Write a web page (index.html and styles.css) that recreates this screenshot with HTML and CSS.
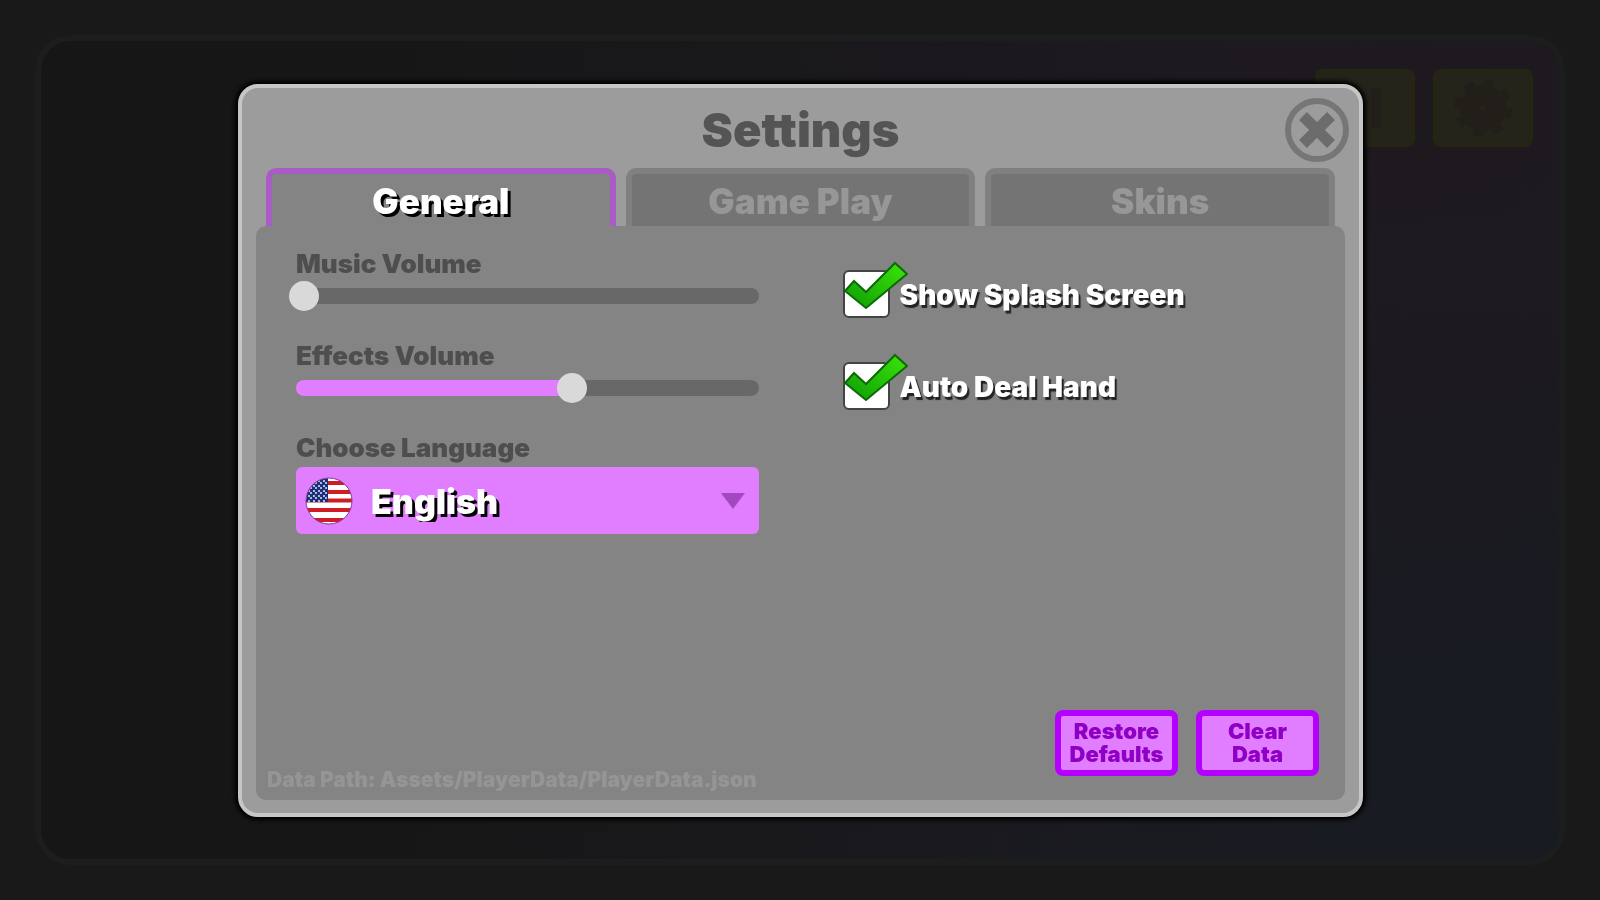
FILE: index.html
```html
<!DOCTYPE html>
<html lang="en">
<head>
    <meta charset="UTF-8">
    <meta name="viewport" content="width=device-width, initial-scale=1.0">
    <title>Settings</title>
    <link rel="stylesheet" href="styles.css">
</head>
<body>
    <main class="game">
        <div class="game-actions">
            <button class="game-btn" aria-label="Statistics">
                <svg viewBox="0 0 60 60" width="60" height="60"><path d="M12 34h8v16h-8zM24 22h8v28h-8zM36 10h10v40H36z" fill="currentColor"/></svg>
            </button>
            <button class="game-btn" aria-label="Settings">
                <svg viewBox="0 0 60 60" width="60" height="60">
                    <circle cx="30" cy="30" r="13" fill="none" stroke="currentColor" stroke-width="20"/>
                    <circle cx="30" cy="30" r="24" fill="none" stroke="currentColor" stroke-width="10" stroke-dasharray="9.4 9.45"/>
                </svg>
            </button>
        </div>
    </main>

    <div class="overlay">
        <section class="modal" role="dialog" aria-labelledby="title">
            <header class="modal-header">
                <h1 id="title">Settings</h1>
                <button class="close-btn" aria-label="Close">
                    <svg viewBox="0 0 64 64" width="64" height="64">
                        <circle cx="32" cy="32" r="29" fill="none" stroke="#767676" stroke-width="6"/>
                        <path d="M18 18L46 46M46 18L18 46" stroke="#6c6c6c" stroke-width="11"/>
                    </svg>
                </button>
            </header>

            <nav class="tabs" role="tablist">
                <button class="tab active" role="tab" aria-selected="true">General</button>
                <button class="tab" role="tab" aria-selected="false">Game Play</button>
                <button class="tab" role="tab" aria-selected="false">Skins</button>
            </nav>

            <div class="panel">
                <div class="options">
                    <div class="column">
                        <div class="field">
                            <label for="music">Music Volume</label>
                            <input type="range" id="music" class="slider" min="0" max="100" value="0" style="--fill: 0%">
                        </div>
                        <div class="field">
                            <label for="effects">Effects Volume</label>
                            <input type="range" id="effects" class="slider" min="0" max="100" value="62" style="--fill: 60%">
                        </div>
                        <div class="field">
                            <label for="language">Choose Language</label>
                            <div class="select-box">
                                <svg class="flag" viewBox="0 0 48 48" width="48" height="48">
                                    <defs>
                                        <clipPath id="round"><circle cx="24" cy="24" r="23"/></clipPath>
                                        <pattern id="stars" width="5" height="5" patternUnits="userSpaceOnUse">
                                            <circle cx="1" cy="1" r="1" fill="#dfe3f5"/>
                                            <circle cx="4" cy="4" r="1" fill="#dfe3f5"/>
                                        </pattern>
                                    </defs>
                                    <g clip-path="url(#round)">
                                        <path d="M0 0h48v48H0z" fill="#fff"/>
                                        <path d="M0 6h48M0 15h48M0 23.500h48M0 33h48M0 43h48" stroke="#d01c24" stroke-width="4"/>
                                        <path d="M0 0h23v25H0z" fill="#1c2f78"/>
                                        <path d="M0 0h23v25H0z" fill="url(#stars)"/>
                                    </g>
                                    <circle cx="24" cy="24" r="23" fill="none" stroke="#7d3a9c" stroke-width="1"/>
                                </svg>
                                <select id="language">
                                    <option>English</option>
                                </select>
                                <svg class="arrow" viewBox="0 0 24 16" width="24" height="16"><path d="M0 0h24L12 16z" fill="#a249bf"/></svg>
                            </div>
                        </div>
                    </div>

                    <div class="column">
                        <label class="check-row">
                            <input type="checkbox" checked>
                            <svg class="tick" viewBox="0 0 66 52" width="66" height="52"><path d="M2 30L11 20L23 31L52 2L64 13L23 47z" fill="url(#green)" stroke="#0d6a08" stroke-width="2"/></svg>
                            <span>Show Splash Screen</span>
                        </label>
                        <label class="check-row">
                            <input type="checkbox" checked>
                            <svg class="tick" viewBox="0 0 66 52" width="66" height="52">
                                <defs>
                                    <linearGradient id="green" x1="0" y1="1" x2="1" y2="0">
                                        <stop offset="0" stop-color="#0d9a06"/>
                                        <stop offset="1" stop-color="#3ce60a"/>
                                    </linearGradient>
                                </defs>
                                <path d="M2 30L11 20L23 31L52 2L64 13L23 47z" fill="url(#green)" stroke="#0d6a08" stroke-width="2"/>
                            </svg>
                            <span>Auto Deal Hand</span>
                        </label>
                    </div>
                </div>

                <footer class="panel-footer">
                    <p class="data-path">Data Path: Assets/PlayerData/PlayerData.json</p>
                    <div class="actions">
                        <button class="btn">Restore<br>Defaults</button>
                        <button class="btn">Clear<br>Data</button>
                    </div>
                </footer>
            </div>
        </section>
    </div>
</body>
</html>
```
FILE: styles.css
```css
* {
    box-sizing: border-box;
}
body {
    margin: 0;
    padding: 35px;
    min-height: 100vh;
    display: flex;
    background: #191919;
    font-family: Inter, "Open Sans", sans-serif;
    font-weight: 900;
}
button, select {
    font: inherit;
    border: none;
    padding: 0;
    cursor: pointer;
}

/* dimmed game table behind the dialog */
.game {
    flex: 1;
    border: 6px solid #1c1d1d;
    border-radius: 36px;
    padding: 28px 26px;
    background:
        radial-gradient(circle at 90% 0%, #1e191f, transparent 40%),
        radial-gradient(circle at 95% 90%, #181b22, transparent 50%),
        linear-gradient(90deg, #161616 10%, #1c1a20 90%);
}
.game-actions {
    display: flex;
    justify-content: flex-end;
    gap: 18px;
}
.game-btn {
    width: 100px;
    height: 78px;
    display: grid;
    place-items: center;
    border: 4px solid #252512;
    border-radius: 8px;
    background: #25241b;
    color: #221f1a;
}

.overlay {
    position: fixed;
    inset: 0;
    display: flex;
    padding: 84px 237px 83px 238px;
}
.modal {
    flex: 1;
    display: flex;
    flex-direction: column;
    padding: 0 14px 13px;
    border: 4px solid #c6c6c6;
    border-radius: 20px;
    background: #9c9c9c;
    box-shadow: 0 0 4px 3px #000;
}
.modal-header {
    display: grid;
    grid-template-columns: 64px 1fr 64px;
    align-items: center;
    height: 80px;
    padding-top: 3px;
    margin: 0 -4px;
}
.modal-header h1 {
    grid-column: 2;
    margin: 0;
    text-align: center;
    font-size: 47px;
    line-height: 64px;
    font-weight: 900;
    color: #545454;
}
.close-btn {
    height: 64px;
    background: none;
}

.tabs {
    display: flex;
    gap: 10px;
    padding: 0 10px;
}
.tab {
    flex: 1;
    height: 58px;
    padding-top: 2px;
    border: 6px solid #808080;
    border-bottom: none;
    border-radius: 10px 10px 0 0;
    background: #747474;
    font-size: 35px;
    line-height: 44px;
    color: #979797;
}
.tab.active {
    border-color: #a85cc6;
    background: #848484;
    color: #fff;
    text-shadow: 3px 3px 0 #000;
}

.panel {
    flex: 1;
    display: flex;
    flex-direction: column;
    justify-content: space-between;
    border-radius: 10px;
    background: #848484;
}
.options {
    display: grid;
    grid-template-columns: 1fr 1fr;
    gap: 84px;
    padding: 22px 40px;
}
.field {
    height: 92px;
}
.field label {
    display: block;
    font-size: 26px;
    line-height: 32px;
    color: #4e4e4e;
}

.slider {
    display: block;
    -webkit-appearance: none;
    appearance: none;
    width: 100%;
    height: 16px;
    margin: 8px 0 0;
    border-radius: 8px;
    background: linear-gradient(90deg, #e07eff var(--fill), #686868 var(--fill));
}
.slider::-webkit-slider-thumb {
    -webkit-appearance: none;
    width: 30px;
    height: 30px;
    margin-left: -7px;
    border-radius: 50%;
    background: #d9d9d9;
}

.select-box {
    display: flex;
    align-items: center;
    height: 67px;
    margin-top: 3px;
    padding: 0 14px 0 9px;
    border-radius: 6px;
    background: #e07eff;
}
.select-box select {
    flex: 1;
    height: 67px;
    padding: 2px 0 0 18px;
    -webkit-appearance: none;
    appearance: none;
    background: none;
    font-size: 34px;
    color: #fff;
    text-shadow: 3px 3px 0 #000;
}

.check-row {
    position: relative;
    display: flex;
    align-items: center;
    gap: 10px;
    height: 92px;
    font-size: 28px;
    line-height: 36px;
    color: #fff;
    text-shadow: 2px 3px 1px #222;
}
.check-row span {
    padding-top: 2px;
}
.check-row input {
    -webkit-appearance: none;
    appearance: none;
    width: 47px;
    height: 48px;
    margin: 0;
    border: 2px solid #444;
    border-radius: 6px;
    background: #fff;
}
.tick {
    position: absolute;
    left: 0;
    top: 13px;
}

.panel-footer {
    display: flex;
    justify-content: space-between;
    align-items: flex-end;
    padding: 0 26px 8px 11px;
}
.data-path {
    margin: 0;
    font-size: 21px;
    line-height: 24px;
    color: #959595;
}
.actions {
    display: flex;
    gap: 18px;
    margin-bottom: 16px;
}
.btn {
    width: 123px;
    height: 66px;
    border: 6px solid #b400ff;
    border-radius: 8px;
    background: #e07eff;
    font-size: 22px;
    line-height: 23px;
    color: #8f00c4;
}
```
